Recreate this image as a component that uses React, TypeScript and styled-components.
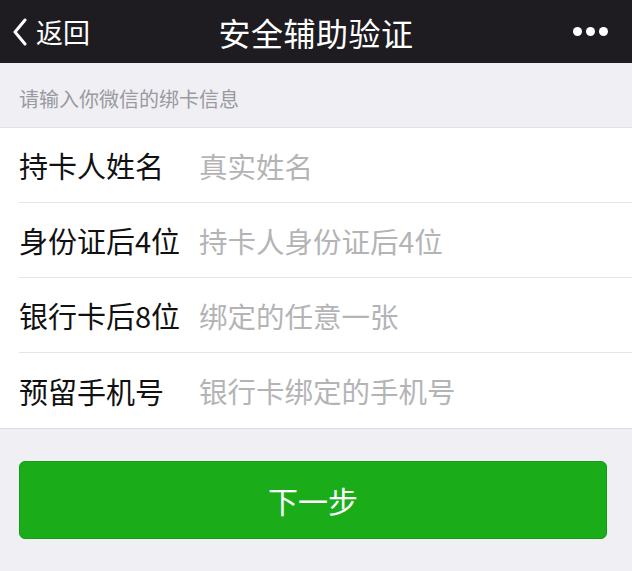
import React from 'react';
import styled, { createGlobalStyle } from 'styled-components';

const GlobalStyle = createGlobalStyle`
  body {
    margin: 0;
    background: #efeff4;
    font-family: "Noto Sans CJK SC", "Noto Sans", sans-serif;
  }
`;

const Page = styled.div`
  width: 632px;
  height: 571px;
  background: #efeff4;
  overflow: hidden;
`;

const NavBar = styled.header`
  height: 63px;
  background: #1e1c21;
  display: grid;
  grid-template-columns: 140px 1fr 140px;
  align-items: center;
  color: #fff;
`;

const Back = styled.div`
  display: flex;
  align-items: center;
  gap: 8px;
  padding-left: 12px;
  font-size: 27px;
  line-height: 1;
`;

const Title = styled.h1`
  margin: 0;
  text-align: center;
  font-size: 32px;
  font-weight: 400;
  letter-spacing: 0.5px;
`;

const More = styled.div`
  display: flex;
  justify-content: flex-end;
  gap: 4px;
  padding-right: 24px;
`;

const Dot = styled.span`
  width: 9px;
  height: 9px;
  border-radius: 50%;
  background: #fff;
`;

const Caption = styled.div`
  height: 64px;
  box-sizing: border-box;
  padding: 23px 0 0 19px;
  font-size: 20px;
  line-height: 26px;
  color: #9a9a9f;
`;

const List = styled.div`
  background: #fff;
  border-top: 1px solid #e2e2e6;
  border-bottom: 1px solid #dcdce0;
`;

const Row = styled.div<{ $last?: boolean }>`
  height: 75px;
  margin-left: 19px;
  display: flex;
  align-items: center;
  box-sizing: border-box;
  border-bottom: ${p => (p.$last ? 'none' : '1px solid #e5e5e5')};
`;

const Label = styled.span`
  width: 180px;
  flex-shrink: 0;
  font-size: 29px;
  color: #111;
`;

const Input = styled.span`
  font-size: 28.5px;
  color: #b4b4b6;
`;

const ButtonWrap = styled.div`
  padding: 32px 25px 0 19px;
`;

const NextButton = styled.button`
  width: 100%;
  height: 78px;
  border: 1px solid #179b16;
  border-radius: 6px;
  background: #1aad19;
  color: #fff;
  font-family: inherit;
  font-size: 30px;
`;

const fields = [
  { label: '持卡人姓名', hint: '真实姓名' },
  { label: '身份证后4位', hint: '持卡人身份证后4位' },
  { label: '银行卡后8位', hint: '绑定的任意一张' },
  { label: '预留手机号', hint: '银行卡绑定的手机号' },
];

const Chevron = () => (
  <svg width="16" height="28" viewBox="0 0 16 28">
    <path d="M13 2 L3 14 L13 26" fill="none" stroke="#fff" strokeWidth="3" strokeLinecap="round" strokeLinejoin="round" />
  </svg>
);

const App = () => {
  return (
    <>
      <GlobalStyle />
      <Page>
        <NavBar>
          <Back>
            <Chevron />
            <span>返回</span>
          </Back>
          <Title>安全辅助验证</Title>
          <More>
            <Dot />
            <Dot />
            <Dot />
          </More>
        </NavBar>
        <Caption>请输入你微信的绑卡信息</Caption>
        <List>
          {fields.map((f, i) => (
            <Row key={f.label} $last={i === fields.length - 1}>
              <Label>{f.label}</Label>
              <Input>{f.hint}</Input>
            </Row>
          ))}
        </List>
        <ButtonWrap>
          <NextButton>下一步</NextButton>
        </ButtonWrap>
      </Page>
    </>
  );
};

export default App;
